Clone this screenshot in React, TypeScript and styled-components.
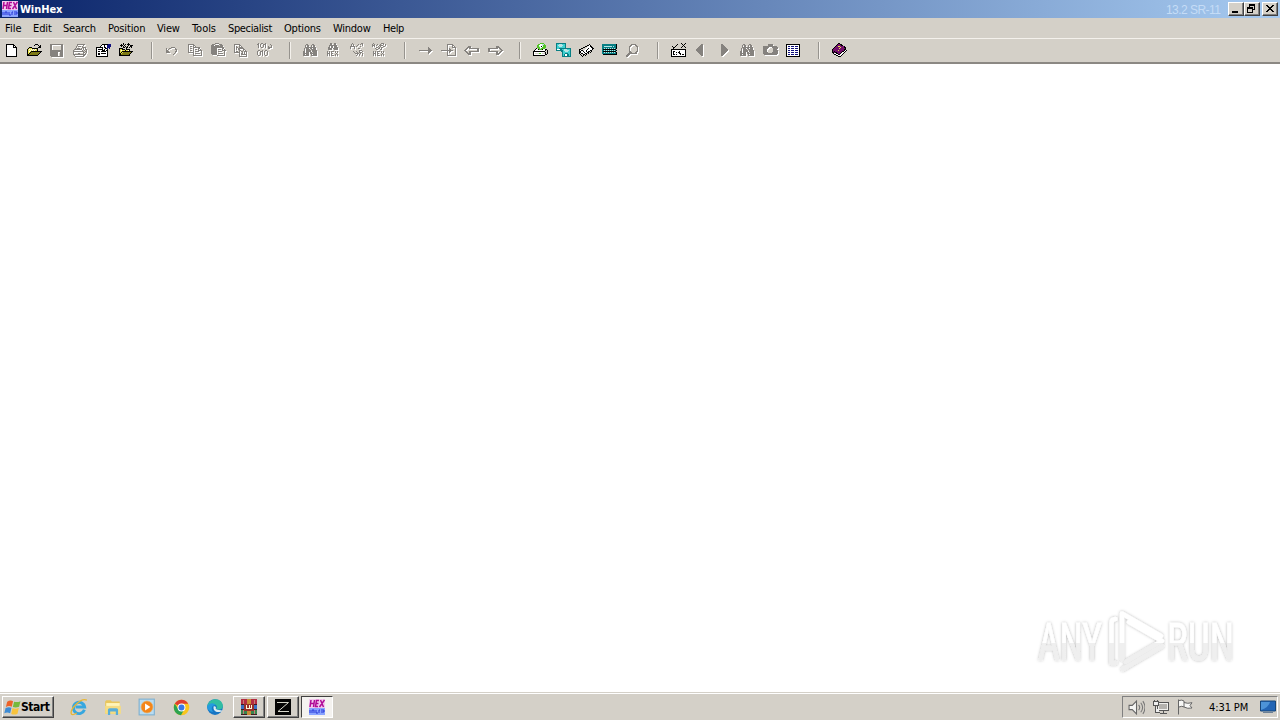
import { FC, ReactNode } from "react";
import styled, { createGlobalStyle } from "styled-components";

const GlobalStyle = createGlobalStyle`
  * {
    box-sizing: border-box;
  }
  body {
    margin: 0;
    background: #fff;
    font-family: "DejaVu Sans Condensed", "DejaVu Sans", sans-serif;
    font-stretch: condensed;
    font-size: 11px;
    color: #000;
  }
`;

const Desktop = styled.div`
  display: flex;
  flex-direction: column;
  width: 1280px;
  height: 720px;
  overflow: hidden;
  position: relative;
`;

const TitleBar = styled.header`
  display: flex;
  align-items: center;
  height: 18px;
  padding: 0 2px;
  background: linear-gradient(90deg, #0a246a, #a6caf0);
`;

const Title = styled.span<{ $width: number }>`
  width: ${({ $width }) => $width}px;
  margin-left: 2px;
  padding-top: 1px;
  color: #fff;
  font-weight: bold;
  line-height: 17px;
  white-space: nowrap;
  letter-spacing: -0.05px;
`;

const Version = styled.span`
  width: 62px;
  margin-left: auto;
  padding-top: 2px;
  color: #c5dcf6;
  font-family: "Liberation Sans", sans-serif;
  font-size: 12px;
  line-height: 16px;
  white-space: nowrap;
  letter-spacing: -0.55px;
`;

const WindowButton = styled.button<{ $gap?: boolean }>`
  display: flex;
  width: 16px;
  height: 14px;
  margin: 0 0 0 ${({ $gap }) => ($gap ? 2 : 0)}px;
  padding: 0;
  border: 1px solid;
  border-color: #fff #404040 #404040 #fff;
  box-shadow: inset -1px -1px #808080;
  background: #d4d0c8;
`;

const MenuBar = styled.nav`
  display: flex;
  height: 20px;
  padding: 1px 0 0 5px;
  gap: 12px;
  background: #d4d0c8;
`;

const MenuItem = styled.span<{ $width: number; $spacing: number }>`
  width: ${({ $width }) => $width}px;
  letter-spacing: ${({ $spacing }) => $spacing}px;
  line-height: 19px;
  white-space: nowrap;
`;

const Toolbar = styled.div`
  display: flex;
  align-items: center;
  height: 26px;
  background: #d4d0c8;
  border-top: 1px solid #f4f1ec;
  border-bottom: 2px solid #8b8883;
`;

const ToolButton = styled.button<{ $disabled?: boolean }>`
  width: 23px;
  height: 22px;
  padding: 3px 3px 3px 4px;
  border: none;
  background: transparent;
  svg {
    display: block;
    filter: ${({ $disabled }) => ($disabled ? "drop-shadow(1px 1px 0 #fff)" : "none")};
  }
`;

const Separator = styled.span`
  width: 2px;
  height: 17px;
  margin: 0 8px 0 13px;
  border-left: 1px solid #96938e;
  border-right: 1px solid #f4f1ec;
`;

const Workspace = styled.main`
  flex: 1;
  background: #fff;
`;

const Taskbar = styled.footer`
  display: flex;
  align-items: flex-start;
  height: 28px;
  padding: 3px 2px 0;
  background: #d4d0c8;
  border-top: 1px solid #d4d0c8;
  box-shadow: inset 0 1px #fff;
`;

const StartButton = styled.button`
  display: flex;
  align-items: center;
  width: 52px;
  height: 22px;
  margin-right: 9px;
  padding: 0 1px;
  border: 1px solid;
  border-color: #fff #404040 #404040 #fff;
  box-shadow: inset -1px -1px #808080;
  background: #d4d0c8;
  color: #000;
  font: bold 12px "DejaVu Sans Condensed", "DejaVu Sans", sans-serif;
  font-stretch: condensed;
  letter-spacing: -0.45px;
`;

const Launcher = styled.button<{ $look?: "raised" | "pressed" }>`
  display: flex;
  align-items: center;
  justify-content: center;
  width: 32px;
  height: 22px;
  margin-right: 2px;
  padding: 0;
  border: 1px solid;
  border-color: ${({ $look }) =>
    $look === "raised" ? "#fff #404040 #404040 #fff" : $look === "pressed" ? "#404040 #fff #fff #404040" : "transparent"};
  box-shadow: ${({ $look }) => ($look === "raised" ? "inset -1px -1px #808080" : "none")};
  background: ${({ $look }) => ($look === "pressed" ? "#f4f2ef" : "transparent")};
`;

const Tray = styled.div`
  display: flex;
  align-items: center;
  width: 156px;
  height: 22px;
  margin-left: auto;
  padding: 0 0 0 5px;
  gap: 8px;
  border: 1px solid;
  border-color: #808080 #fff #fff #808080;
`;

const Clock = styled.span`
  width: 43px;
  margin-left: 8px;
  white-space: nowrap;
  letter-spacing: -0.1px;
`;

const Watermark = styled.div`
  position: absolute;
  left: 1030px;
  top: 602px;
`;

const Icon: FC<{ children: ReactNode; size?: number; smooth?: boolean }> = ({ children, size = 16, smooth }) => (
  <svg width={size} height={size} viewBox="0 0 16 16" fill="none" shapeRendering={smooth ? "auto" : "crispEdges"}>
    {children}
  </svg>
);

const PALETTE: Record<string, string> = {
  "#": "#000",
  g: "#85827e",
  w: "#fff",
  y: "#e6e04a",
  o: "#7d7a14",
  n: "#10107c",
  c: "#3fd0d0",
  t: "#087f84",
  l: "#b8e4e4",
  p: "#74106c",
  s: "#d4d0c8",
  e: "#54c428",
};

// disabled glyphs are see-through, so that the white relief shows inside them
const DISABLED_PALETTE: Record<string, string> = { ...PALETTE, w: "none", s: "none" };

interface IPixels {
  rows: string[];
  colors?: Record<string, string>;
}

// one rect for each run of equal letters
const Pixels: FC<IPixels> = ({ rows, colors = PALETTE }) => (
  <Icon>
    {rows.flatMap((row, y) =>
      Array.from(row.matchAll(/([^.])\1*/g)).map((run) => (
        <rect key={`${run.index}-${y}`} x={run.index} y={y} width={run[0].length} height={1} fill={colors[run[1]]} />
      ))
    )}
  </Icon>
);

const ART: Record<string, string[]> = {
  new: ["", "..########", "..#wwwwww##", "..#wwwwww#w#", "..#wwwwww####", "..#wwwwwwwww#", "..#wwwwwwwww#", "..#wwwwwwwww#", "..#wwwwwwwww#", "..#wwwwwwwww#", "..#wwwwwwwww#", "..#wwwwwwwww#", "..#wwwwwwwww#", "..###########"],
  open: ["", "........###", ".......#...#.#", "............##", "..###......###", ".#yyy######", "#ywywywywy#", "#yywywywyy#", "#ywy###########", "#yy#ooooooooo#", "#y#ooooooooo#", "##ooooooooo#", "###########"],
  save: ["", "ggggggggggggg", "ggsssssssssgg", "ggsssssssssgg", "ggsssssssssgg", "ggsssssssssgg", "ggsssssssssgg", "ggggggggggggg", "ggggggggggggg", "ggggggggssggg", "ggggggggssggg", "ggggggggssggg", "ggggggggssggg", ".gggggggggggg"],
  print: ["", "....gggggggg", "....gwwwwwg", "...gwgggwg", "...gwwwwwgggg", "..gwgggwgwgwg", ".ggggggggwgwgg", "gwwwwwwwwgwgwg", "gggggggggggwgg", "gwwwwwwwwwggwg", "gwwwwggwwwgwg", "ggggggggggggg", ".gwwwwwwwwgg", "..ggggggggg"],
  props: ["", "......######nnn", ".....#ww#wwnnnn", "....#www#wwnnnn", "#######w##wnnn", "#wwwww#ww##n.n", "#w#####w#ww#", "#wwwww###w##", "#w##w#####w#", "#wwwwwwwwww#", "#w##w#####w#", "#w##wwwwwww#", "#wwwwwwwwww#", "############"],
  openDisk: ["....#....#", "..#.#.#.###", ".###.#...#.###", "..#.#.#.#..##", "....##.##.#.#", "####...#", "#yy###.####", "#ywyyy#yyw#", "#yy###########", "#y#yoooooooo#", "##yoooooooo#", "##oooooooo#", "###########"],
  undo: ["", "", "", "", "......gggg", ".g..gg....g", ".g.g......gg", ".gg........g", ".ggg......gg", ".gggg.....g", ".........g", "........g"],
  copy: ["", "gggggg", "gwwwwgg", "gwggwgwg", "gwwwwggggggg", "gwggwgwwwwgg", "gwwwwgwggwgwg", "gwggwgwwwwgggg", "gwwwwgwggggwwg", "ggggggwwwwwwwg", ".....gwgggggwg", ".....gwwwwwwwg", ".....ggggggggg"],
  paste: ["....gggg", ".gggwwwwggg", "gggwggggwggg", "gggggggggggg", "ggggggggggggg", "ggggggwwwwwgg", "ggggggwgggwgwg", "ggggggwwwwwgggg", "ggggggwggggwwg", "ggggggwwwwwwwg", "ggggggwgggggwg", ".gggggwwwwwwwg", "......gggggggg"],
  copyBlock: ["", "gggggg", "gwwwwgg", "gwgwwgwg", "gwggwgggg", "gwgwgggggg", "gwgwggwwwgg", "gwwwwggwwgwg", "gwggwgwggwggg", "ggggggwwgwgwg", ".....gwggwgwg", ".....gwgggggg", ".....gwwwwwwg", ".....gggggggg"],
  bits: [".g..gg..g", "gg.g..ggg....g", ".g.g..g.g.....g", ".g.g..g.g..g..g", ".g..gg..g..gggg", "...........gg", "", ".gg..g..gg", "g..ggg.g..g", "g..g.g.g..g", "g..g.g.g..g", "g..g.g.g..g", ".gg..g..gg"],
  find: ["", "...gg....gg", "..gwgg..gwgg", "..gwgg..gwgg", "..ggggggggggg", ".gwgggwggwggg", ".gwggggwggggg", ".gwgggggwggggg", "ggwgggggwggggg", "ggwggg.ggwgggg", "gggggg.ggggggg", "ggwggg..gwgggg", "gggggg..gggggg"],
  findHex: ["....gg..gg", "....gg..gg", "...gggggggg", "...gwggwggg", "..ggwggwgggg", "..gggg.ggggg", "..gggg..gggg", "", ".g.g.ggg.g.g", ".g.g.g...g.g", ".ggg.gg...g", ".g.g.g...g.g", ".g.g.ggg.g.g"],
  replace: ["...g........gg", "..g.g....g.g.g", "..g.g...g....g", ".ggggg.g...g", ".g...g", ".g...g...gg", "", "..........ggg", "....g..g..g..g", ".....g..g.ggg", "......gggg.g.g", "........g.g..g", ".......g..g..g"],
  replaceHex: [".g.......ggg", "g.g..g..g..g.g", "ggg.g..gggg..g", "g.g...g.g..gg", "....gg.g.gg", "...g..gg.g", "....gg..gg", "", ".g.g.ggg.g.g", ".g.g.g...g.g", ".ggg.gg...g", ".g.g.g...g.g", ".g.g.ggg.g.g"],
  goto: ["", "", "", "", "..........g", "..........gg", "..........ggg", ".ggggggggggggg", "..........ggg", "..........gg", "..........g"],
  gotoPage: ["", "......gggggg", "......gwwwwgg", "......gwwwwgwg", "......gwwwwgggg", "......gwgwwwwwg", "......gwggwwwwg", "ggggggggggggwwg", "......gwggwwwwg", "......gwgwwwwwg", "......gwwwwwwwg", "......gwwwwwwwg", "......ggggggggg"],
  back: ["", "", "", "....ggg", "...gggg", "..ggwgggggggggg", ".ggwwwwwwwwwwgg", "ggwwwwwwwwwwwgg", ".ggwwgggggggggg", "..ggwgg", "...gggg", "....ggg"],
  forward: ["", "", "", ".........ggg", ".........gggg", ".ggggggggggwgg", ".ggwwwwwwwwwwgg", ".ggwwwwwwwwwwwgg", ".ggggggggggwwgg", ".........ggwgg", ".........gggg", ".........ggg"],
  disk: [".......eeee", ".....eewwlle", "....eewwwleee", "....eelw#weee", "....eeewweeee", "...#.eeleeee", "..#ww#eee#ww##", ".#wwwwwwwwww#s#", "############ss#", "#wwwwwwwwwws#s#", "#wsssseewsss#s#", "#wwwwwwwwwww##", "############"],
  drives: ["tttttttttt", "tcclllccct", "tclllllcct", "tcclllccct", "tcccccccct", "tcctttttttttttt", "twwwttcclllccct", "tttttttclllllct", ".....ttcclllcct", "......tccccccct", "......tcctttcct", "......tctwwttct", "......tctwwttct", "......ttttttttt"],
  ram: ["", "..........#", "........##w#", "......##sww##", "....##sswwww##", "..##sssww#www##", "##ssssww#wwww#", "#w##sww#www##", "##ww#ww#w##.#", "##www#ww##.#", "#.##ww##.#", ".#..##.#", "..#.#.#", "...#"],
  calc: ["", "tttttttttttttt#", "tttttttttttttt#", "ttlllllllltltt#", "tttttttttttttt#", "ttltltltltltlt#", "t#############", "ttltltltltltlt#", "t#############", "ttltltltltltlt#", "tttttttttttttt#", ".##############"],
  zoom: ["", "......ggggg", ".....gg...gg", "....gg.ww..gg", "....g.w.....g", "....g.w.....g", "....g.......g", "....g.......g", "....gg.....gg", "....ggg...gg", "...ggggggggg", "..ggg", ".ggg", ".gg"],
  console: ["..........#...#", "......#....#.#", ".....#......#", ".#..#......#.#", "..##......#...#", "..#", "###############", "#wwwwwwwwwwwww#", "#w##wwww#wwwww#", "#w#ww#w##wwwww#", "#w#wwwww##wwww#", "#w##w#www#w##w#", "#wwwwwwwwwwwww#", "###############"],
  prev: ["", ".......gg", "......ggg", ".....gggg", "....ggggg", "...gggggg", "..ggggggg", "..ggggggg", "...gggggg", "....ggggg", ".....gggg", "......ggg", ".......gg"],
  next: ["", "....gg", "....ggg", "....gggg", "....ggggg", "....gggggg", "....ggggggg", "....ggggggg", "....gggggg", "....ggggg", "....gggg", "....ggg", "....gg"],
  camera: ["", ".....ggggg", ".....ggggg", "gggggggggggggg", "ggggggwwwgggggg", "gggggwssswggggg", "ggggwsssssgggg", "ggggwsssssggggg", "ggggwsssssggggg", "gggggssssgggggg", "ggggggggggggggg", ".ggggggggggggg"],
  table: ["", "##############", "#wwwwwwwwwwww#", "#wnnwnnnwnnnw#", "#wwwwwwwwwwww#", "#wnnwnnnwnnnw#", "#wwwwwwwwwwww#", "#wnnwnnnwnnnw#", "#wwwwwwwwwwww#", "#wnnwnnnwnnnw#", "#wwwwwwwwwwww#", "#wnnwnnnwnnnw#", "#wwwwwwwwwwww#", "##############"],
  book: ["......##", ".....#pp##", "....#pppp##", "...#ppyypppp#", "..#pppppyppp##", ".#pppppyppppp#", "#ppppppppppp##", "#pppppyppppp#w#", "#p#ppppppp##w#", "##p##pppp#ww#", ".#ww##pp#ww#", "..##ww##ww#", "....##www#", "......###"],
};

interface ITool {
  art: string;
  disabled?: boolean;
}

const off = (...arts: string[]): ITool[] => arts.map((art) => ({ art, disabled: true }));
const on = (...arts: string[]): ITool[] => arts.map((art) => ({ art }));

const TOOL_GROUPS: ITool[][] = [
  [...on("new", "open"), ...off("save", "print"), ...on("props", "openDisk")],
  off("undo", "copy", "paste", "copyBlock", "bits"),
  off("find", "findHex", "replace", "replaceHex"),
  off("goto", "gotoPage", "back", "forward"),
  [...on("disk", "drives", "ram", "calc"), ...off("zoom")],
  [...on("console"), ...off("prev", "next", "find", "camera"), ...on("table")],
  on("book"),
];

// label, width, letter spacing
const MENU: [string, number, number][] = [
  ["File", 16, 0.05],
  ["Edit", 18, -0.1],
  ["Search", 33, -0.2],
  ["Position", 37, -0.15],
  ["View", 23, -0.2],
  ["Tools", 24, -0.05],
  ["Specialist", 44, -0.35],
  ["Options", 37, -0.2],
  ["Window", 38, -0.25],
  ["Help", 22, -0.4],
];

const HexIcon: FC = () => (
  <Icon smooth>
    <rect width="16" height="9" fill="#f3c9ee" />
    <rect y="9" width="16" height="7" fill="#8aa4ff" />
    <path d="M2 1 1 8M5.500 1l-1 7M1.500 4.500h3.500M10 1.500H7.500l-1 6H9M7 4.500h2.500M11.500 1l3 7M15.500 1l-5 7" stroke="#b00a96" strokeWidth="1.500" />
    <path d="M1 11v3M3 14v-3h2v3M7 11v3h2M11 11h-1v3M12 11h3v2h-3" stroke="#2636d8" strokeWidth="1" />
  </Icon>
);

const StartFlag: FC = () => (
  <Icon size={17} smooth>
    <path d="M3 2.500Q6 .5 8.500 2L7.300 7.200Q4.500 6 1.800 7.500z" fill="#ed6228" />
    <path d="M9.500 2.500Q12.500 3.500 15.500 2L14.200 7.300Q11 8.500 8.300 7.500z" fill="#76b93b" />
    <path d="M1.500 8.500Q4.500 7 7 8.200L5.800 13.500Q3 12 .3 13.500z" fill="#3d8bd4" />
    <path d="M8 8.500Q11 10 14 8.300L12.700 13.800Q10 15.500 6.800 14z" fill="#f8c33c" />
  </Icon>
);

const IeIcon: FC = () => (
  <Icon size={18} smooth>
    <path d="M12.800 10.500A5 5 0 1 1 13 8H5" stroke="#36a7df" strokeWidth="2.600" />
    <path d="M1.500 14.500C-1 11 9-.5 15 1.800M1.500 14.500c1 .8 3-.2 4.500-1.200" stroke="#e8b634" strokeWidth="1.200" />
  </Icon>
);

const FolderIcon: FC = () => (
  <Icon size={18} smooth>
    <path d="M1 3l1-1h4l1 1h7v11H1z" fill="#e9c65c" />
    <path d="M2 4.500h12V9H2z" fill="#fff4b8" />
    <path d="M1 7h14v7H1z" fill="#f5dc83" />
    <path d="M3.500 15v-4.500q0-1.500 1.500-1.500h6q1.500 0 1.500 1.500V15h-2v-3h-5v3z" fill="#58add9" />
  </Icon>
);

const PlayerIcon: FC = () => (
  <Icon size={18} smooth>
    <rect x="1" y="1" width="13.500" height="14" fill="#b9dcf2" stroke="#7fb0d0" />
    <circle cx="8" cy="8" r="5.300" fill="#f48519" stroke="#e8ae62" strokeWidth=".6" />
    <path d="M6.300 4.800v6.400L11 8z" fill="#fff" />
  </Icon>
);

const ChromeIcon: FC = () => (
  <Icon size={17} smooth>
    <circle cx="8" cy="8" r="7.300" fill="#f9c51d" />
    <path d="M8 8 1.700 4.400A7.300 7.300 0 0 1 14.300 4.400H8z" fill="#df3d30" />
    <path d="M8 8 5.200 9.800 1.700 4.400A7.300 7.300 0 0 0 7.500 15.300l3.200-5.600z" fill="#2da350" />
    <circle cx="8" cy="8" r="3.700" fill="#fff" />
    <circle cx="8" cy="8" r="2.800" fill="#3978e5" />
  </Icon>
);

const EdgeIcon: FC = () => (
  <Icon size={18} smooth>
    <circle cx="8" cy="8" r="7" fill="#1675c4" />
    <path d="M1 7.500C2 3 5 1 8.500 1c4 0 6.500 3 6.500 6 0 2.500-2 3.500-4.500 3.300-1.500-.1-1.800-.8-1-1.500C10.500 6.500 7 3.500 1 7.500z" fill="#31bda2" />
    <path d="M1 7.500C3 4 7.500 4 8.500 6.500 5 6 4 10 6.500 12.500 3 12 1 10 1 7.500z" fill="#249be0" />
    <path d="M7 7c-1 2 .2 5.500 4 5.500 1.500 0 3-.5 3.500-1 0 0-.5-.8-3-.9C8 10.500 8.500 8.500 9 8z" fill="#dcebf1" />
  </Icon>
);

const RarIcon: FC = () => (
  <Icon>
    <path d="M0 0h16v5H0z" fill="#b32b42" />
    <path d="M0 5h16v5H0z" fill="#386fc4" />
    <path d="M0 11h16v5H0z" fill="#38844d" />
    <path d="M0 5.500h16M0 10.500h16M0 15.500h16" stroke="#401920" />
    <path d="M6 0h4v16H6z" fill="#c98c36" />
    <path d="M3 5h10v7H3z" fill="#98312a" />
    <path d="M5.500 6v3.500h5V6M8 6v3" stroke="#fff5d9" />
    <path d="M2.500 1v4M13.500 1v4M2.500 11v4M13.500 11v4" stroke="#c87b74" />
  </Icon>
);

const ZIcon: FC = () => (
  <Icon smooth>
    <rect width="16" height="16" fill="#050505" />
    <path d="M2 3.500h11.500L3 12.500h11" stroke="#d7d7cc" strokeWidth="1" />
  </Icon>
);

const SpeakerIcon: FC = () => (
  <Icon size={17} smooth>
    <path d="M1 6h3l4-4v12L4 10H1z" fill="#f4f4f2" stroke="#666" />
    <path d="M10 5.500q2 2.500 0 5M12 3.500q3.500 4.500 0 9M14 2q4 6 0 12" stroke="#777" />
  </Icon>
);

const NetworkIcon: FC = () => (
  <Icon>
    <path d="M4.500 3.500h11v8h-11zM7 14.500h7M10.500 12v2" fill="#f0f0ed" stroke="#555" />
    <path d="M6 5h8v5H6z" fill="#b4b2ae" />
    <path d="M.5 2.500h5v4h-5zM1.500 .5v2M4.500 .5v2M2.500 7v6.500H7" fill="#eee" stroke="#555" />
  </Icon>
);

const FlagIcon: FC = () => (
  <Icon smooth>
    <path d="M1.500 .5v15M2 1.500q3-1 5 .5v6Q5 6.500 2 8M7 3.500q3.500 1.500 8 .2L13 6.500l2 2.500Q10.500 10 7 8" fill="#f7f7f5" stroke="#666" />
  </Icon>
);

const ScreenIcon: FC = () => (
  <Icon smooth>
    <path d="M.5 2h15v10H.5z" fill="#2365b5" stroke="#174679" />
    <path d="M1 11V3h9Q9 8 1 11z" fill="#4d93d7" />
    <path d="M3 13.500h10" stroke="#6c8096" />
  </Icon>
);

const AnyRunMark: FC = () => (
  <svg width="250" height="78" viewBox="0 0 250 78" fill="none">
    <defs>
      <linearGradient id="fade" x1="0" y1="0" x2="0" y2="78" gradientUnits="userSpaceOnUse">
        <stop offset=".52" stopColor="#fff" />
        <stop offset=".53" stopColor="#efefef" />
      </linearGradient>
      <filter id="glow" x="-10%" y="-20%" width="120%" height="140%">
        <feDropShadow dx="0" dy="0" stdDeviation="1.800" floodColor="#000" floodOpacity=".3" />
      </filter>
    </defs>
    <g filter="url(#glow)">
      <g fill="url(#fade)" stroke="url(#fade)" strokeWidth=".6" fontFamily="Roboto, sans-serif" fontSize="52">
        <text x="8" y="58" textLength="64" lengthAdjust="spacingAndGlyphs">ANY</text>
        <text x="137" y="58" textLength="67" lengthAdjust="spacingAndGlyphs">RUN</text>
      </g>
      <g stroke="url(#fade)" strokeWidth="4.500" strokeLinejoin="round" strokeLinecap="round">
        <path d="M92 57V11.500L131 34M99 20l33 19-36 21" />
        <path d="M85.500 17q-4 0-4 4v40h4M93 67l39-23" />
      </g>
    </g>
  </svg>
);

export default function App() {
  return (
    <>
      <GlobalStyle />
      <Desktop>
        <TitleBar>
          <HexIcon />
          <Title $width={60}>WinHex</Title>
          <Version>13.2 SR-11</Version>
          <WindowButton aria-label="Minimize">
            <svg width="14" height="12" shapeRendering="crispEdges">
              <path d="M3 8h6v2H3z" />
            </svg>
          </WindowButton>
          <WindowButton aria-label="Restore">
            <svg width="14" height="12" shapeRendering="crispEdges">
              <path d="M4 1h6v6H8V6h1V3H5v1H4zM2 4h6v6H2zM3 6v3h4V6z" fillRule="evenodd" />
            </svg>
          </WindowButton>
          <WindowButton aria-label="Close" $gap>
            <svg width="14" height="12" shapeRendering="crispEdges">
              <path d="M3 2h2v1h1v1h2V3h1V2h2v1h-1v1H9v1H8v1h1v1h1v1h1v1H9V8H8V7H6v1H5v1H3V8h1V7h1V6h1V5H5V4H4V3H3z" />
            </svg>
          </WindowButton>
        </TitleBar>
        <MenuBar>
          {MENU.map(([label, width, spacing]) => (
            <MenuItem key={label} $width={width} $spacing={spacing}>
              {label}
            </MenuItem>
          ))}
        </MenuBar>
        <Toolbar>
          {TOOL_GROUPS.map((group, index) => [
            index > 0 && <Separator key={index} />,
            ...group.map(({ art, disabled }) => (
              <ToolButton key={`${index}-${art}`} $disabled={disabled} aria-label={art}>
                <Pixels rows={ART[art]} colors={disabled ? DISABLED_PALETTE : PALETTE} />
              </ToolButton>
            )),
          ])}
        </Toolbar>
        <Workspace />
        <Taskbar>
          <StartButton>
            <StartFlag />
            Start
          </StartButton>
          <Launcher><IeIcon /></Launcher>
          <Launcher><FolderIcon /></Launcher>
          <Launcher><PlayerIcon /></Launcher>
          <Launcher><ChromeIcon /></Launcher>
          <Launcher><EdgeIcon /></Launcher>
          <Launcher $look="raised"><RarIcon /></Launcher>
          <Launcher $look="raised"><ZIcon /></Launcher>
          <Launcher $look="pressed"><HexIcon /></Launcher>
          <Tray>
            <SpeakerIcon />
            <NetworkIcon />
            <FlagIcon />
            <Clock>4:31 PM</Clock>
            <ScreenIcon />
          </Tray>
        </Taskbar>
        <Watermark>
          <AnyRunMark />
        </Watermark>
      </Desktop>
    </>
  );
}
